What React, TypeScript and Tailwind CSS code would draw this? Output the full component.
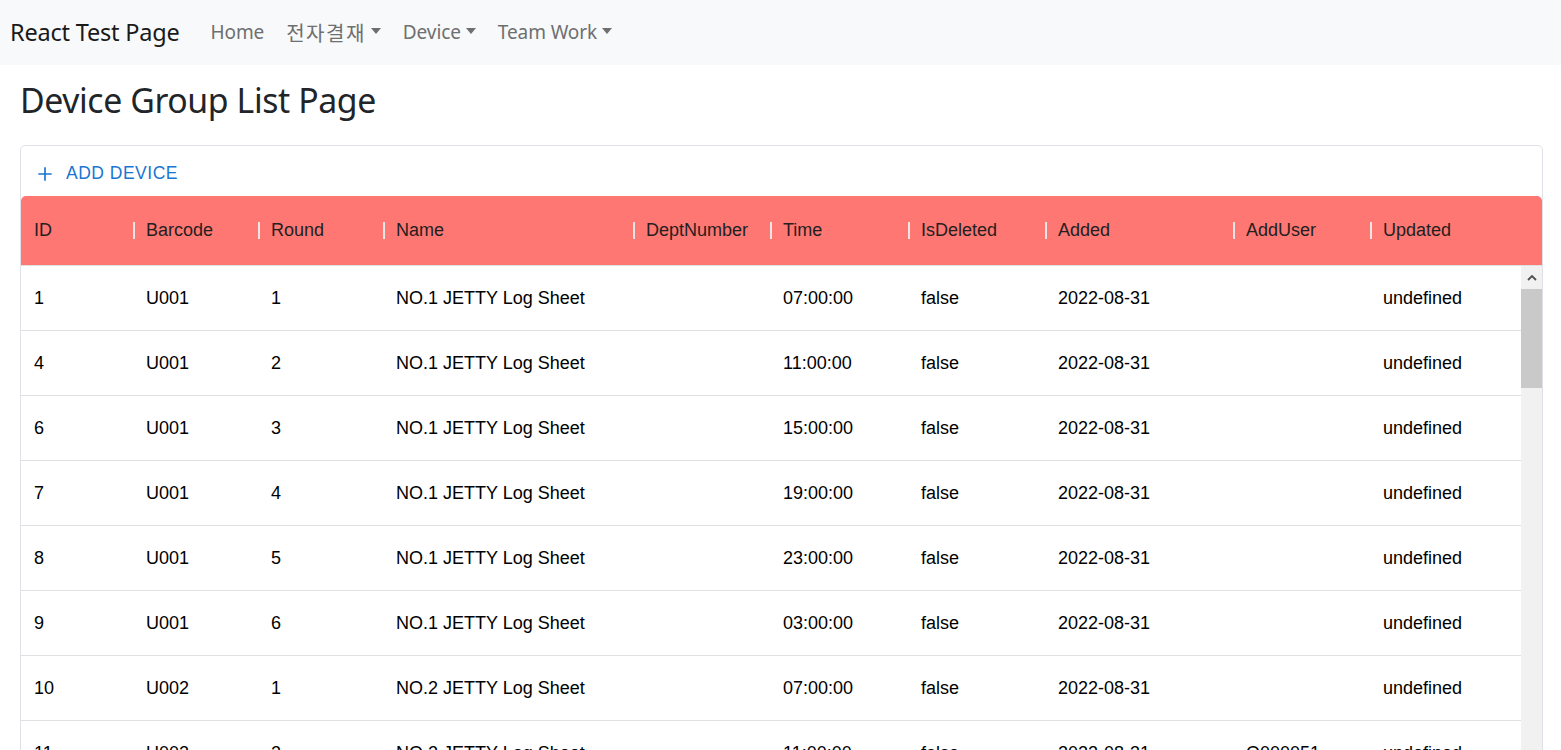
import React from 'react';

interface DeviceRow {
    id: number;
    barcode: string;
    round: number;
    name: string;
    dept: string;
    time: string;
    isDeleted: string;
    added: string;
    addUser: string;
    updated: string;
}

const columns = [
    { label: 'ID', width: 'w-[113px]' },
    { label: 'Barcode', width: 'w-[125px]' },
    { label: 'Round', width: 'w-[125px]' },
    { label: 'Name', width: 'w-[250px]' },
    { label: 'DeptNumber', width: 'w-[137px]' },
    { label: 'Time', width: 'w-[138px]' },
    { label: 'IsDeleted', width: 'w-[137px]' },
    { label: 'Added', width: 'w-[188px]' },
    { label: 'AddUser', width: 'w-[137px]' },
    { label: 'Updated', width: 'flex-1' },
];

const rows: DeviceRow[] = [
    { id: 1, barcode: 'U001', round: 1, name: 'NO.1 JETTY Log Sheet', dept: '', time: '07:00:00', isDeleted: 'false', added: '2022-08-31', addUser: '', updated: 'undefined' },
    { id: 4, barcode: 'U001', round: 2, name: 'NO.1 JETTY Log Sheet', dept: '', time: '11:00:00', isDeleted: 'false', added: '2022-08-31', addUser: '', updated: 'undefined' },
    { id: 6, barcode: 'U001', round: 3, name: 'NO.1 JETTY Log Sheet', dept: '', time: '15:00:00', isDeleted: 'false', added: '2022-08-31', addUser: '', updated: 'undefined' },
    { id: 7, barcode: 'U001', round: 4, name: 'NO.1 JETTY Log Sheet', dept: '', time: '19:00:00', isDeleted: 'false', added: '2022-08-31', addUser: '', updated: 'undefined' },
    { id: 8, barcode: 'U001', round: 5, name: 'NO.1 JETTY Log Sheet', dept: '', time: '23:00:00', isDeleted: 'false', added: '2022-08-31', addUser: '', updated: 'undefined' },
    { id: 9, barcode: 'U001', round: 6, name: 'NO.1 JETTY Log Sheet', dept: '', time: '03:00:00', isDeleted: 'false', added: '2022-08-31', addUser: '', updated: 'undefined' },
    { id: 10, barcode: 'U002', round: 1, name: 'NO.2 JETTY Log Sheet', dept: '', time: '07:00:00', isDeleted: 'false', added: '2022-08-31', addUser: '', updated: 'undefined' },
    { id: 11, barcode: 'U002', round: 2, name: 'NO.2 JETTY Log Sheet', dept: 'xxxx xxxxx', time: '11:00:00', isDeleted: 'false', added: '2022-08-31', addUser: 'O000051', updated: 'undefined' },
];

const Caret: React.FC = () => (
    <span className="ml-[5px] inline-block w-0 h-0 border-x-[5.5px] border-x-transparent border-t-[6px] border-t-current translate-y-[-2px]" />
);

const NavBar: React.FC = () => (
    <nav className="h-[65px] bg-[#f8f9fa] flex items-center px-[10px] font-['Noto_Sans','Noto_Sans_CJK_KR',sans-serif]">
        <span className="text-[23.5px] text-[#1a1a1a] mr-[31px] tracking-[-0.2px]">React Test Page</span>
        <div className="flex items-center gap-[22px] text-[19px] text-[#6e6f70] tracking-[-0.1px]">
            <span>Home</span>
            <span className="flex items-center font-['Noto_Sans_CJK_KR',sans-serif] text-[20px] tracking-[1.5px]">전자결재<Caret /></span>
            <span className="flex items-center">Device<Caret /></span>
            <span className="flex items-center">Team Work<Caret /></span>
        </div>
    </nav>
);

const ScrollBar: React.FC = () => (
    <div className="w-[21px] bg-[#f1f1f1] flex flex-col">
        <div className="h-[23px] flex items-center justify-center">
            <svg viewBox="0 0 10 6" className="w-[10px] h-[6px]">
                <path d="M1 5 L5 1 L9 5" fill="none" stroke="#505050" strokeWidth="1.8" />
            </svg>
        </div>
        <div className="h-[99px] bg-[#c9c9c9]" />
    </div>
);

const DataTable: React.FC = () => (
    <div className="border border-[#dee2e6] rounded-[5px] overflow-hidden">
        <div className="h-[50px] flex items-center pt-[5px] pl-[14px] text-[#1976d2] font-['Liberation_Sans',Arial,sans-serif] text-[17.5px] tracking-[0.5px]">
            <svg viewBox="0 0 24 24" className="w-[20px] h-[20px] mr-[11px]">
                <path d="M12 4v16M4 12h16" stroke="#1976d2" strokeWidth="2" fill="none" />
            </svg>
            ADD DEVICE
        </div>
        <div className="h-[70px] bg-[#ff7773] rounded-t-[5px] flex items-center font-['Liberation_Sans',Arial,sans-serif] text-[18px] text-[#231f1f] border-b border-[#e0e0e0]">
            {columns.map((c, i) => (
                <div key={c.label} className={`${c.width} flex items-center h-full`}>
                    {i > 0 && <span className="w-[2px] h-[17px] bg-[#e6e6e6] -ml-px" />}
                    <span className={i > 0 ? 'ml-[11px]' : 'ml-[13px]'}>{c.label}</span>
                </div>
            ))}
        </div>
        <div className="flex">
            <div className="flex-1 font-['Liberation_Sans',Arial,sans-serif] text-[18px] text-black">
                {rows.map((r) => (
                    <div key={r.id} className="h-[65px] flex items-center border-b border-[#e0e0e0]">
                        <div className="w-[113px] pl-[13px]">{r.id}</div>
                        <div className="w-[125px] pl-[12px]">{r.barcode}</div>
                        <div className="w-[125px] pl-[12px]">{r.round}</div>
                        <div className="w-[250px] pl-[12px]">{r.name}</div>
                        <div className="w-[137px] pl-[12px] text-[#d8d8d8] text-[15px]">{r.dept}</div>
                        <div className="w-[138px] pl-[12px]">{r.time}</div>
                        <div className="w-[137px] pl-[12px]">{r.isDeleted}</div>
                        <div className="w-[188px] pl-[12px]">{r.added}</div>
                        <div className="w-[137px] pl-[12px]">{r.addUser}</div>
                        <div className="flex-1 pl-[12px]">{r.updated}</div>
                    </div>
                ))}
            </div>
            <ScrollBar />
        </div>
    </div>
);

export default function App() {
    return (
        <div className="h-[750px] overflow-hidden bg-white">
            <NavBar />
            <main className="px-[20px] pr-[18px]">
                <h2 className="h-[80px] flex items-center pb-[9px] text-[33.8px] text-[#212529] font-['Noto_Sans',sans-serif] tracking-[-0.4px]">
                    Device Group List Page
                </h2>
                <DataTable />
            </main>
        </div>
    );
}
